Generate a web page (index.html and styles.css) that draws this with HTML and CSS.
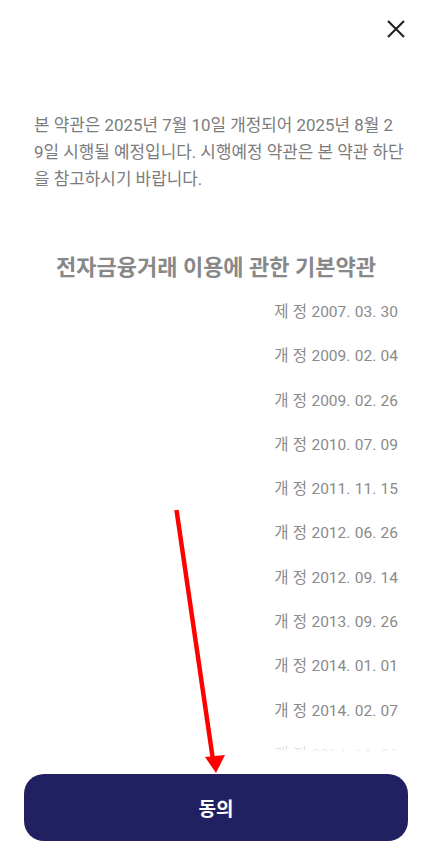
FILE: index.html
```html
<!DOCTYPE html>
<html lang="ko">
<head>
<meta charset="utf-8">
<link rel="stylesheet" href="styles.css">
</head>
<body>
<div class="page">
  <header class="header">
    <button class="close" aria-label="닫기">
      <svg width="20" height="20" viewBox="0 0 20 20"><path d="M2 2 L18 18 M18 2 L2 18" stroke="#222" stroke-width="2.1" fill="none"/></svg>
    </button>
  </header>
  <main class="content">
    <p class="notice">본 약관은 2025년 7월 10일 개정되어 2025년 8월 2<br>9일 시행될 예정입니다. 시행예정 약관은 본 약관 하단<br>을 참고하시기 바랍니다.</p>
    <h1 class="title">전자금융거래 이용에 관한 기본약관</h1>
    <ul class="dates">
      <li>제 정 2007. 03. 30</li>
      <li>개 정 2009. 02. 04</li>
      <li>개 정 2009. 02. 26</li>
      <li>개 정 2010. 07. 09</li>
      <li>개 정 2011. 11. 15</li>
      <li>개 정 2012. 06. 26</li>
      <li>개 정 2012. 09. 14</li>
      <li>개 정 2013. 09. 26</li>
      <li>개 정 2014. 01. 01</li>
      <li>개 정 2014. 02. 07</li>
      <li>개 정 2014. 11. 26</li>
    </ul>
    <div class="fade"></div>
  </main>
  <footer class="footer">
    <button class="agree">동의</button>
  </footer>
  <svg class="arrow" width="432" height="861" viewBox="0 0 432 861">
    <line x1="176.5" y1="510" x2="213" y2="760" stroke="#f00" stroke-width="4.5"/>
    <polygon points="205,757 225,755 216,773" fill="#f00"/>
  </svg>
</div>
</body>
</html>
```
FILE: styles.css
```css
html, body {
  margin: 0;
  padding: 0;
  background: #fff;
}
body {
  font-family: Roboto, "Noto Sans CJK KR", sans-serif;
}
.page {
  position: relative;
  width: 432px;
  height: 861px;
  display: flex;
  flex-direction: column;
  overflow: hidden;
}
.header {
  height: 58px;
  display: flex;
  justify-content: flex-end;
  align-items: center;
  padding-right: 26px;
  flex: none;
}
.close {
  border: 0;
  background: none;
  padding: 0;
  width: 20px;
  height: 20px;
  display: flex;
}
.content {
  position: relative;
  flex: 1;
  overflow: hidden;
  padding: 54px 34px 0 34px;
  min-height: 0;
}
.notice {
  margin: 0;
  font-size: 16.9px;
  line-height: 27px;
  color: #7c7c7c;
  white-space: nowrap;
}
.title {
  margin: 60px 0 7px 0;
  text-align: center;
  font-size: 22px;
  line-height: 30px;
  font-weight: 700;
  color: #888;
  white-space: nowrap;
}
.dates {
  list-style: none;
  margin: 0;
  padding: 0;
  text-align: right;
}
.dates li {
  font-size: 15.5px;
  line-height: 44.3px;
  color: #8a8a8a;
  word-spacing: 0.5px;
}
.fade {
  position: absolute;
  left: 0;
  right: 0;
  bottom: 0;
  height: 10px;
  background: linear-gradient(to bottom, rgba(255,255,255,0.3), #fff);
}
.footer {
  flex: none;
  padding: 22px 24px 20px 24px;
}
.agree {
  width: 100%;
  height: 67px;
  border: 0;
  border-radius: 20px;
  background: #212162;
  color: #fff;
  font-family: "Noto Sans CJK KR", sans-serif;
  font-size: 19px;
  font-weight: 700;
}
.arrow {
  position: absolute;
  left: 0;
  top: 0;
  pointer-events: none;
}
```
